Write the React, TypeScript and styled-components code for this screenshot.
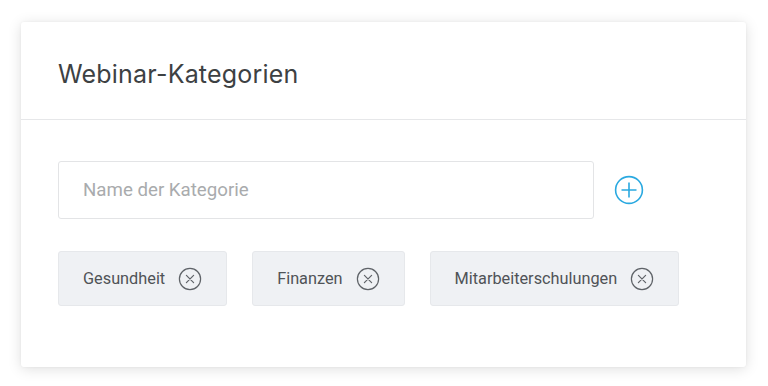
import React from 'react';
import styled, { createGlobalStyle } from 'styled-components';

const GlobalStyle = createGlobalStyle`
  html, body {
    margin: 0;
    padding: 0;
    background: #ffffff;
  }
  body {
    font-family: Roboto, "Liberation Sans", sans-serif;
  }
`;

const categories = ['Gesundheit', 'Finanzen', 'Mitarbeiterschulungen'];

const CircleX = () => (
  <svg width="24" height="24" viewBox="0 0 24 24" fill="none">
    <circle cx="12" cy="12" r="10.6" stroke="#5f6368" strokeWidth="1.2" />
    <path d="M8.4 8.4 L15.6 15.6 M15.6 8.4 L8.4 15.6" stroke="#5f6368" strokeWidth="1.2" strokeLinecap="round" />
  </svg>
);

const CirclePlus = () => (
  <svg width="30" height="30" viewBox="0 0 30 30" fill="none">
    <circle cx="15" cy="15" r="13.4" stroke="#2aa9e0" strokeWidth="1.6" />
    <path d="M15 7.5 V22.5 M7.5 15 H22.5" stroke="#2aa9e0" strokeWidth="1.6" />
  </svg>
);

const App = (): JSX.Element => {
  return (
    <>
      <GlobalStyle />
      <Page>
        <Card>
          <Header>
            <Title>Webinar-Kategorien</Title>
          </Header>
          <Body>
            <InputRow>
              <NameInput placeholder="Name der Kategorie" />
              <AddButton aria-label="Kategorie hinzufügen">
                <CirclePlus />
              </AddButton>
            </InputRow>
            <ChipList>
              {categories.map((name) => (
                <Chip key={name}>
                  <ChipLabel>{name}</ChipLabel>
                  <RemoveButton aria-label={`${name} entfernen`}>
                    <CircleX />
                  </RemoveButton>
                </Chip>
              ))}
            </ChipList>
          </Body>
        </Card>
      </Page>
    </>
  );
};

const Page = styled.div`
  width: 768px;
  height: 386px;
  padding: 22px 22px 0 21px;
  box-sizing: border-box;
`;

const Card = styled.div`
  width: 725px;
  height: 345px;
  background: #ffffff;
  border-radius: 3px;
  box-shadow: 0 2px 14px rgba(0, 0, 0, 0.13), 0 0 3px rgba(0, 0, 0, 0.05);
  display: flex;
  flex-direction: column;
`;

const Header = styled.div`
  height: 98px;
  border-bottom: 1px solid #e6e7e9;
  display: flex;
  align-items: center;
  padding: 0 37px;
  box-sizing: border-box;
`;

const Title = styled.h1`
  margin: 0;
  margin-top: 6px;
  font-family: Inter, "Open Sans", sans-serif;
  font-weight: 400;
  font-size: 25px;
  letter-spacing: 0.2px;
  color: #3d4143;
`;

const Body = styled.div`
  padding: 41px 37px 0;
  display: flex;
  flex-direction: column;
  gap: 32px;
`;

const InputRow = styled.div`
  display: flex;
  align-items: center;
  gap: 20px;
`;

const NameInput = styled.input`
  width: 536px;
  height: 58px;
  box-sizing: border-box;
  border: 1px solid #e3e4e6;
  border-radius: 3px;
  padding: 0 24px;
  font-family: Roboto, "Liberation Sans", sans-serif;
  font-size: 18.7px;
  color: #333;
  outline: none;

  &::placeholder {
    color: #a9abad;
  }
`;

const AddButton = styled.button`
  border: none;
  background: none;
  padding: 0;
  display: flex;
  cursor: pointer;
`;

const ChipList = styled.div`
  display: flex;
  gap: 25px;
`;

const Chip = styled.div`
  height: 55px;
  display: flex;
  align-items: center;
  gap: 13px;
  padding: 0 24px 0 24px;
  background: #eff1f4;
  border: 1px solid #e6e8eb;
  border-radius: 3px;
  box-sizing: border-box;
`;

const ChipLabel = styled.span`
  font-size: 16.3px;
  color: #4f5357;
`;

const RemoveButton = styled.button`
  border: none;
  background: none;
  padding: 0;
  display: flex;
  cursor: pointer;
`;

export default App;
